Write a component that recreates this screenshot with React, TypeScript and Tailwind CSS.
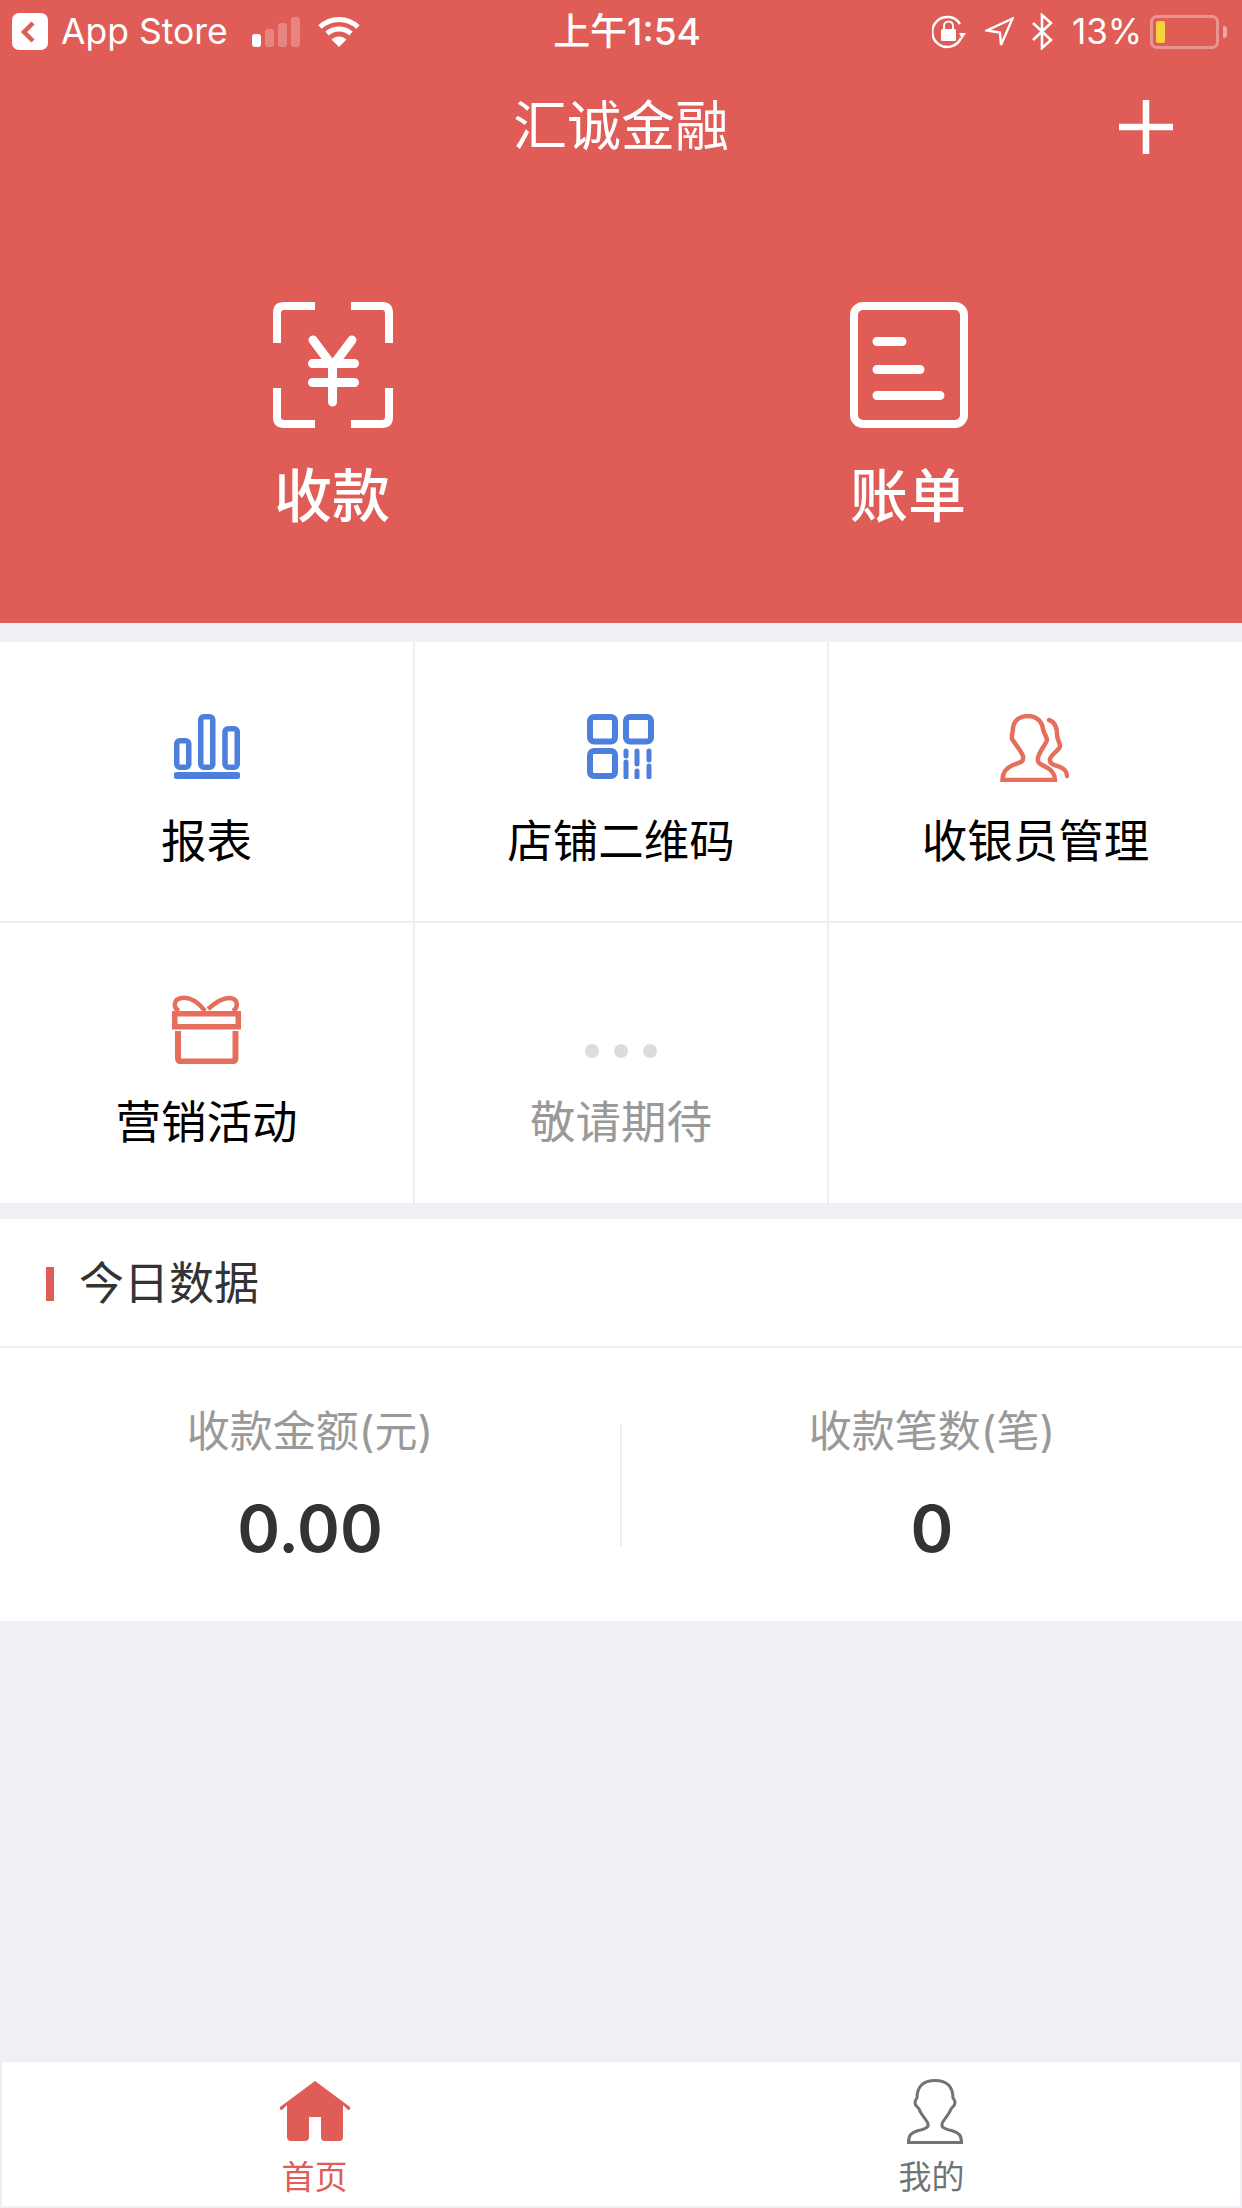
const font = "font-['Inter','Noto_Sans_CJK_SC',sans-serif]";

const StatusBar = () => (
  <div className="flex h-[62px] items-start pt-[13px] text-white">
    <div className="flex w-[553px] items-center pl-[12px]">
      <svg width="36" height="37" viewBox="0 0 36 37">
        <rect width="36" height="37" rx="7" fill="#fff" />
        <path d="M21 10 L12 19 L21 28" fill="none" stroke="#df5c57" strokeWidth="4.5" />
      </svg>
      <span className="ml-[13px] w-[191px] text-[35.5px] leading-[37px]">App Store</span>
      <div className="flex h-[30px] items-end gap-[4px]">
        <div className="h-[13px] w-[9px] rounded-[3px] bg-white" />
        <div className="h-[18px] w-[9px] rounded-[3px] bg-white/25" />
        <div className="h-[24px] w-[9px] rounded-[3px] bg-white/25" />
        <div className="h-[30px] w-[9px] rounded-[3px] bg-white/25" />
      </div>
      <svg className="ml-[18px]" width="42" height="30" viewBox="0 0 42 30">
        <path d="M2 10 C13 0 29 0 40 10" fill="none" stroke="#fff" strokeWidth="5" />
        <path d="M9 16.5 C16 10.5 26 10.5 33 16.5" fill="none" stroke="#fff" strokeWidth="5" />
        <path d="M21 30 L13.5 22.5 C18 18.5 24 18.5 28.5 22.5 Z" fill="#fff" />
      </svg>
    </div>
    <span className="w-[148px] text-center text-[37px] leading-[37px] font-medium whitespace-nowrap">上午1:54</span>
    <div className="flex items-center pl-[231px]">
      <svg width="34" height="37" viewBox="0 0 34 37">
        <path d="M28 11 A15 15 0 1 0 29 25" fill="none" stroke="#fff" strokeWidth="2.5" />
        <path d="M27 20 L34 20 L30 26 Z" fill="#fff" />
        <rect x="9" y="16" width="15" height="12" rx="1.5" fill="#fff" />
        <path d="M12 16 V13 A4.5 4.5 0 0 1 21 13 V16" fill="none" stroke="#fff" strokeWidth="2" />
      </svg>
      <svg className="ml-[19px]" width="29" height="30" viewBox="0 0 29 30">
        <path d="M27.5 1.5 L2 13.5 L15 15.5 L16 28 Z" fill="none" stroke="#fff" strokeWidth="2.4" />
      </svg>
      <svg className="ml-[18px]" width="21" height="37" viewBox="0 0 21 37">
        <path d="M1 10 L19 27 L10 35 V2 L19 10 L1 27" fill="none" stroke="#fff" strokeWidth="2.6" />
      </svg>
      <span className="ml-[19px] w-[78px] text-[35px] leading-[37px]">13%</span>
      <div className="flex items-center">
        <div className="h-[34px] w-[69px] rounded-[7px] border-[3px] border-white/35 p-[3px]">
          <div className="h-full w-[9px] rounded-[2px] bg-[#f6d33c]" />
        </div>
        <div className="ml-[4px] h-[12px] w-[4px] rounded-r-[3px] bg-white/45" />
      </div>
    </div>
  </div>
);

const ScanIcon = () => (
  <svg className="ml-[2px]" width="120" height="126" viewBox="0 0 120 126" fill="none" stroke="#fff">
    <path d="M4 41 V11 Q4 4 11 4 H42 M78 4 H109 Q116 4 116 11 V41 M116 86 V115 Q116 122 109 122 H78 M42 122 H11 Q4 122 4 115 V86" strokeWidth="8" />
    <path d="M40 38 L59.5 64 L79 38 M59.5 64 V100 M39.5 61.5 H81.5 M39.5 80.5 H81.5" strokeWidth="9" strokeLinecap="round" strokeLinejoin="round" />
  </svg>
);

const BillIcon = () => (
  <svg className="ml-[2px]" width="118" height="126" viewBox="0 0 118 126" fill="none" stroke="#fff">
    <rect x="4" y="4" width="110" height="118" rx="9" strokeWidth="8" />
    <path d="M27 39.5 H52 M27 67.5 H70 M27 93.5 H90" strokeWidth="9" strokeLinecap="round" />
  </svg>
);

const ChartIcon = () => (
  <svg width="66" height="65" viewBox="0 0 66 65" fill="none" stroke="#4d7fdc" strokeWidth="5.5">
    <rect x="2.75" y="26.75" width="12" height="26.5" rx="3" />
    <rect x="26.75" y="2.75" width="12" height="50.5" rx="3" />
    <rect x="51" y="14.75" width="12.25" height="38.5" rx="3" />
    <path d="M3 61.5 H63" strokeWidth="7" strokeLinecap="round" />
  </svg>
);

const QrIcon = () => (
  <svg className="mr-[2px]" width="67" height="65" viewBox="0 0 67 65" fill="none" stroke="#4d7fdc" strokeWidth="6">
    <rect x="3" y="3" width="25" height="24.5" rx="4" />
    <rect x="39" y="3" width="25" height="24.5" rx="4" />
    <rect x="3" y="37" width="25" height="25" rx="4" />
    <path d="M39 37 V42 M39 48 V63 M50 37 V50 M50 57 V63 M62 37 V46 M62 52 V63" strokeWidth="5" strokeLinecap="round" />
  </svg>
);

const CashierIcon = () => (
  <svg className="mr-[2px]" width="70" height="68" viewBox="0 0 70 68" fill="none" stroke="#e56f5c" strokeWidth="4.5">
    <path d="M2.5 66 C2.5 58 6 54 13 51 C21 48 24 48 23 42 C21 37 14 28 12 25 C11 22 13 19 13 14 C14 6 20 2 28 2 C36 2 42 7 43 15 C44 20 47 23 47 26 C46 30 39 38 38 44 C37 49 40 50 46 53 C52 56 55 60 55 66 Z" />
    <path d="M49 6 C55 8 57 13 57 20 C57 26 60 28 60 32 C60 36 51 40 50 45 C49 50 54 51 60 53 C65 55 67 58 67 62" strokeLinecap="round" />
  </svg>
);

const GiftIcon = () => (
  <svg width="69" height="69" viewBox="0 0 69 69" fill="none" stroke="#e56f5c" strokeWidth="5.5">
    <rect x="2.75" y="18.75" width="63.5" height="13" />
    <path d="M6 36 V63 Q6 66.5 10 66.5 H59 Q63.5 66.5 63.5 63 V36" strokeWidth="6" />
    <path d="M33 16 C26 7 18 2 10 3 C1 4 1 13 7 16 M36 14 C44 7 50 3 57 3 C66 3 67 12 61 16" strokeWidth="4.5" />
  </svg>
);

const HomeIcon = () => (
  <svg width="72" height="60" viewBox="0 0 72 60">
    <path d="M36 0 L71 26 Q72 29 69 29 L64 24 V56 Q64 60 60 60 H46 Q42 60 42 56 V36 H30 V56 Q30 60 26 60 H12 Q8 60 8 56 V24 L3 29 Q0 29 1 26 Z" fill="#df5c57" />
  </svg>
);

const UserIcon = () => (
  <svg className="ml-[6px]" width="56" height="65" viewBox="0 0 56 65" fill="none" stroke="#6f7478" strokeWidth="3">
    <path d="M1.5 63.5 C1.5 56 4 54 10 52 C17 50 22 49 21 45 C20 41 14 36 12 30 C11 28 8 27 8 24 C8 21 9 20 10 19 C10 8 16 1.5 28 1.5 C40 1.5 46 8 46 19 C47 20 48 21 48 24 C48 27 45 28 44 30 C42 36 36 41 35 45 C34 49 39 50 46 52 C52 54 54.5 56 54.5 63.5 Z" />
  </svg>
);

const Cell = ({ icon, label, muted, edge }: { icon?: React.ReactNode, label?: string, muted?: boolean, edge?: boolean }) => (
  <div className={`flex h-full flex-col items-center pt-[72px] ${edge ? '' : 'border-r-2 border-[#eeeef2]'}`}>
    <div className="flex h-[68px] items-start justify-center">{icon}</div>
    {label && <span className={`mt-[30px] text-[45.5px] leading-[60px] ${muted ? 'text-[#999999]' : 'text-black'}`}>{label}</span>}
  </div>
);

export default function App() {
  return (
    <div className={`flex h-[2208px] w-[1242px] flex-col overflow-hidden bg-[#efeff4] ${font}`}>
      <div className="h-[623px] bg-[#df5c57]">
        <StatusBar />
        <div className="grid h-[130px] grid-cols-[1fr_auto_1fr] items-center text-white">
          <div />
          <span className="text-[54px] leading-[64px]">汇诚金融</span>
          <div className="flex justify-end pr-[69px]">
            <svg width="54" height="54" viewBox="0 0 54 54">
              <path d="M0 27 H54 M27 0 V54" stroke="#fff" strokeWidth="6.5" />
            </svg>
          </div>
        </div>
        <div className="grid grid-cols-2 pt-[110px] pr-[46px] pl-[44px] text-white">
          <div className="flex flex-col items-center">
            <ScanIcon />
            <span className="mt-[36px] text-[58px] leading-[64px] font-medium">收款</span>
          </div>
          <div className="flex flex-col items-center">
            <BillIcon />
            <span className="mt-[36px] text-[58px] leading-[64px] font-medium">账单</span>
          </div>
        </div>
      </div>

      <div className="mt-[19px] grid grid-cols-[415px_414px_413px] grid-rows-[281px_280px] bg-white">
        <div className="border-b-2 border-[#eeeef2]"><Cell icon={<ChartIcon />} label="报表" /></div>
        <div className="border-b-2 border-[#eeeef2]"><Cell icon={<QrIcon />} label="店铺二维码" /></div>
        <div className="border-b-2 border-[#eeeef2]"><Cell icon={<CashierIcon />} label="收银员管理" edge /></div>
        <Cell icon={<GiftIcon />} label="营销活动" />
        <Cell
          icon={
            <div className="mt-[49px] flex gap-[15px]">
              <div className="size-[14px] rounded-full bg-[#dcdcdc]" />
              <div className="size-[14px] rounded-full bg-[#dcdcdc]" />
              <div className="size-[14px] rounded-full bg-[#dcdcdc]" />
            </div>
          }
          label="敬请期待"
          muted
        />
        <Cell edge />
      </div>

      <div className="mt-[16px] flex h-[129px] items-center border-b-2 border-[#eeeef2] bg-white pt-[3px] pl-[46px]">
        <div className="h-[34px] w-[8px] bg-[#df5c57]" />
        <span className="ml-[25px] text-[45px] leading-[60px] text-[#333333]">今日数据</span>
      </div>
      <div className="flex h-[273px] items-center bg-white">
        <Stat label="收款金额(元)" value="0.00" />
        <div className="h-[122px] w-[2px] bg-[#eeeef2]" />
        <Stat label="收款笔数(笔)" value="0" />
      </div>

      <div className="flex-1" />

      <div className="mx-[2px] mb-[2px] grid h-[144px] grid-cols-2 bg-white">
        <div className="flex flex-col items-center pt-[19px] pl-[6px]">
          <div className="flex h-[63px] items-start"><HomeIcon /></div>
          <span className="mt-[13px] text-[33px] leading-[40px] text-[#df5c57]">首页</span>
        </div>
        <div className="flex flex-col items-center pt-[17px] pl-[2px]">
          <div className="flex h-[65px] items-start"><UserIcon /></div>
          <span className="mt-[13px] text-[33px] leading-[40px] text-[#6f7478]">我的</span>
        </div>
      </div>
    </div>
  );
}

function Stat({ label, value }: { label: string, value: string }) {
  return (
    <div className="flex flex-1 flex-col items-center pt-[3px]">
      <span className="text-[43px] leading-[54px] text-[#999999]">{label}</span>
      <span className="mt-[31px] text-[65px] leading-[80px] font-semibold text-[#333333]">{value}</span>
    </div>
  );
}
